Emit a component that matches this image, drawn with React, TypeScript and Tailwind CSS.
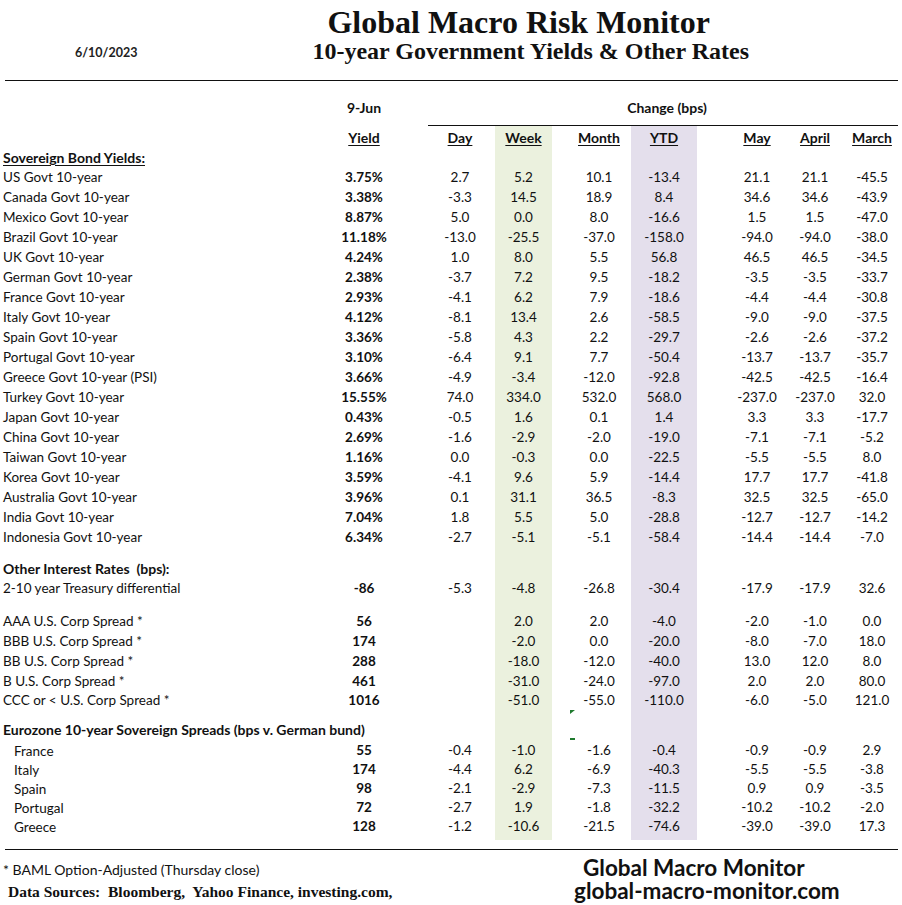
import React from "react";

type Row = {
  label: string;
  yld: string;
  vals: string[];
};

const SOVEREIGN: Row[] = [
  { label: "US Govt 10-year", yld: "3.75%", vals: ["2.7", "5.2", "10.1", "-13.4", "21.1", "21.1", "-45.5"] },
  { label: "Canada Govt 10-year", yld: "3.38%", vals: ["-3.3", "14.5", "18.9", "8.4", "34.6", "34.6", "-43.9"] },
  { label: "Mexico Govt 10-year", yld: "8.87%", vals: ["5.0", "0.0", "8.0", "-16.6", "1.5", "1.5", "-47.0"] },
  { label: "Brazil Govt 10-year", yld: "11.18%", vals: ["-13.0", "-25.5", "-37.0", "-158.0", "-94.0", "-94.0", "-38.0"] },
  { label: "UK Govt 10-year", yld: "4.24%", vals: ["1.0", "8.0", "5.5", "56.8", "46.5", "46.5", "-34.5"] },
  { label: "German Govt 10-year", yld: "2.38%", vals: ["-3.7", "7.2", "9.5", "-18.2", "-3.5", "-3.5", "-33.7"] },
  { label: "France Govt 10-year", yld: "2.93%", vals: ["-4.1", "6.2", "7.9", "-18.6", "-4.4", "-4.4", "-30.8"] },
  { label: "Italy Govt 10-year", yld: "4.12%", vals: ["-8.1", "13.4", "2.6", "-58.5", "-9.0", "-9.0", "-37.5"] },
  { label: "Spain Govt 10-year", yld: "3.36%", vals: ["-5.8", "4.3", "2.2", "-29.7", "-2.6", "-2.6", "-37.2"] },
  { label: "Portugal Govt 10-year", yld: "3.10%", vals: ["-6.4", "9.1", "7.7", "-50.4", "-13.7", "-13.7", "-35.7"] },
  { label: "Greece Govt 10-year (PSI)", yld: "3.66%", vals: ["-4.9", "-3.4", "-12.0", "-92.8", "-42.5", "-42.5", "-16.4"] },
  { label: "Turkey Govt 10-year", yld: "15.55%", vals: ["74.0", "334.0", "532.0", "568.0", "-237.0", "-237.0", "32.0"] },
  { label: "Japan Govt 10-year", yld: "0.43%", vals: ["-0.5", "1.6", "0.1", "1.4", "3.3", "3.3", "-17.7"] },
  { label: "China Govt 10-year", yld: "2.69%", vals: ["-1.6", "-2.9", "-2.0", "-19.0", "-7.1", "-7.1", "-5.2"] },
  { label: "Taiwan Govt 10-year", yld: "1.16%", vals: ["0.0", "-0.3", "0.0", "-22.5", "-5.5", "-5.5", "8.0"] },
  { label: "Korea Govt 10-year", yld: "3.59%", vals: ["-4.1", "9.6", "5.9", "-14.4", "17.7", "17.7", "-41.8"] },
  { label: "Australia Govt 10-year", yld: "3.96%", vals: ["0.1", "31.1", "36.5", "-8.3", "32.5", "32.5", "-65.0"] },
  { label: "India Govt 10-year", yld: "7.04%", vals: ["1.8", "5.5", "5.0", "-28.8", "-12.7", "-12.7", "-14.2"] },
  { label: "Indonesia Govt 10-year", yld: "6.34%", vals: ["-2.7", "-5.1", "-5.1", "-58.4", "-14.4", "-14.4", "-7.0"] },
];

const CORP: Row[] = [
  { label: "AAA U.S. Corp Spread *", yld: "56", vals: ["", "2.0", "2.0", "-4.0", "-2.0", "-1.0", "0.0"] },
  { label: "BBB U.S. Corp Spread *", yld: "174", vals: ["", "-2.0", "0.0", "-20.0", "-8.0", "-7.0", "18.0"] },
  { label: "BB U.S. Corp Spread *", yld: "288", vals: ["", "-18.0", "-12.0", "-40.0", "13.0", "12.0", "8.0"] },
  { label: "B U.S. Corp Spread *", yld: "461", vals: ["", "-31.0", "-24.0", "-97.0", "2.0", "2.0", "80.0"] },
  { label: "CCC or < U.S. Corp Spread *", yld: "1016", vals: ["", "-51.0", "-55.0", "-110.0", "-6.0", "-5.0", "121.0"] },
];

const EURO: Row[] = [
  { label: "France", yld: "55", vals: ["-0.4", "-1.0", "-1.6", "-0.4", "-0.9", "-0.9", "2.9"] },
  { label: "Italy", yld: "174", vals: ["-4.4", "6.2", "-6.9", "-40.3", "-5.5", "-5.5", "-3.8"] },
  { label: "Spain", yld: "98", vals: ["-2.1", "-2.9", "-7.3", "-11.5", "0.9", "0.9", "-3.5"] },
  { label: "Portugal", yld: "72", vals: ["-2.7", "1.9", "-1.8", "-32.2", "-10.2", "-10.2", "-2.0"] },
  { label: "Greece", yld: "128", vals: ["-1.2", "-10.6", "-21.5", "-74.6", "-39.0", "-39.0", "17.3"] },
];

// Day, Week, Month, YTD, May, April, March
const COLS = [
  "ml-[25px] w-[70px]",
  "w-[57px] bg-[#ebf1de]",
  "ml-[15px] w-[64px]",
  "w-[66px] bg-[#e4dfec]",
  "ml-[31px] w-[58px]",
  "w-[58px]",
  "w-[56px]",
];

const HEADS = ["Day", "Week", "Month", "YTD", "May", "April", "March"];

const Line = ({
  h,
  label,
  labelClass = "",
  yld = "",
  yldClass = "",
  vals = ["", "", "", "", "", "", ""],
  extra,
}: {
  h: string;
  label?: React.ReactNode;
  labelClass?: string;
  yld?: React.ReactNode;
  yldClass?: string;
  vals?: React.ReactNode[];
  extra?: React.ReactNode;
}) => (
  <div className={`flex ${h}`}>
    <div className={`flex w-[328px] shrink-0 items-center whitespace-nowrap ${labelClass}`}>{label}</div>
    <div className={`flex w-[72px] shrink-0 items-center justify-center font-bold ${yldClass}`}>{yld}</div>
    {COLS.map((c, i) => (
      <div key={i} className={`relative flex shrink-0 items-center justify-center ${c}`}>
        {vals[i]}
        {i === 2 ? extra : null}
      </div>
    ))}
  </div>
);

export default function App() {
  return (
    <div className="h-[905px] w-[902px] overflow-hidden bg-white font-['Lato','Open_Sans',sans-serif] text-[13.5px] leading-none text-[#111]">
      {/* title block */}
      <div className="flex h-[80px]">
        <div className="w-[75px]" />
        <div className="pt-[47px] text-[12.5px] font-bold text-[#222]">6/10/2023</div>
        <div className="ml-[175px] flex flex-col font-['Liberation_Serif','Times_New_Roman',serif] font-bold text-[#111]">
          <div className="mt-[6px] ml-[15px] text-[32px] leading-[32px]">Global Macro Risk Monitor</div>
          <div className="mt-[1px] text-[24px] leading-[24px]">10-year Government Yields &amp; Other Rates</div>
        </div>
      </div>
      <div className="mx-[5px] mr-[4px] border-t border-[#111]" />

      {/* column group heading */}
      <div className="flex h-[45px]">
        <div className="w-[328px]" />
        <div className="flex w-[72px] items-center justify-center pt-[9px] text-[14px] font-bold">9-Jun</div>
        <div className="ml-[28px] flex w-[470px] flex-col">
          <div className="flex h-[44px] items-center justify-center pt-[9px] pl-[8px] text-[14px] font-bold">Change (bps)</div>
          <div className="border-t border-[#111]" />
        </div>
      </div>

      <Line
        h="h-[22px]"
        yld={<span className="underline underline-offset-2">Yield</span>}
        yldClass="pt-[2px] text-[14px]"
        vals={HEADS.map((t) => (
          <span key={t} className="pt-[2px] text-[14px] font-bold underline underline-offset-2">{t}</span>
        ))}
      />
      <Line
        h="h-[20px]"
        label={<span className="text-[14px] font-bold underline underline-offset-2">Sovereign Bond Yields:</span>}
        labelClass="pl-[3px]"
      />
      {SOVEREIGN.map((r) => (
        <Line key={r.label} h="h-[20px]" label={r.label} labelClass="pl-[3px]" yld={r.yld} vals={r.vals} />
      ))}

      <Line h="h-[10px]" />
      <Line
        h="h-[21px]"
        label={<span className="text-[14px] font-bold">Other Interest Rates&nbsp; (bps):</span>}
        labelClass="pl-[3px]"
      />
      <Line
        h="h-[20px]"
        label="2-10 year Treasury differential"
        labelClass="pl-[3px]"
        yld="-86"
        vals={["-5.3", "-4.8", "-26.8", "-30.4", "-17.9", "-17.9", "32.6"]}
      />
      <Line h="h-[13px]" />
      {CORP.map((r, i) => (
        <Line
          key={r.label}
          h={i < 3 ? "h-[20px]" : "h-[19px]"}
          label={r.label}
          labelClass="pl-[3px]"
          yld={r.yld}
          vals={r.vals}
        />
      ))}
      <Line
        h="h-[9px]"
        extra={
          <span className="absolute top-0 left-[3px] h-[4px] w-[5px] bg-[#1f7a2e] [clip-path:polygon(0_0,100%_0,0_100%)]" />
        }
      />
      <Line
        h="h-[22px]"
        label={<span className="text-[14px] font-bold">Eurozone 10-year Sovereign Spreads (bps v. German bund)</span>}
        labelClass="pl-[3px]"
        extra={<span className="absolute bottom-[1px] left-[3px] h-[2px] w-[5px] bg-[#1f7a2e]" />}
      />
      {EURO.map((r) => (
        <Line
          key={r.label}
          h="h-[19px]"
          label={<span className="pt-[3px]">{r.label}</span>}
          labelClass="pl-[14px]"
          yld={r.yld}
          vals={r.vals}
        />
      ))}
      <Line h="h-[4px]" />

      <div className="mt-[9px] mx-[5px] mr-[4px] border-t border-[#111]" />

      {/* footer */}
      <div className="flex">
        <div className="flex w-[570px] flex-col">
          <div className="mt-[13px] pl-[3px] text-[14px]">* BAML Option-Adjusted (Thursday close)</div>
          <div className="mt-[7px] pl-[8px] font-['Liberation_Serif','Times_New_Roman',serif] text-[15.5px] font-bold">
            Data Sources:&nbsp; Bloomberg,&nbsp; Yahoo Finance, investing.com,
          </div>
        </div>
        <div className="flex flex-col text-[22.5px] font-bold leading-[23px] text-[#111]">
          <div className="mt-[6px] ml-[13px]">Global Macro Monitor</div>
          <div className="ml-[4px]">global-macro-monitor.com</div>
        </div>
      </div>
    </div>
  );
}
